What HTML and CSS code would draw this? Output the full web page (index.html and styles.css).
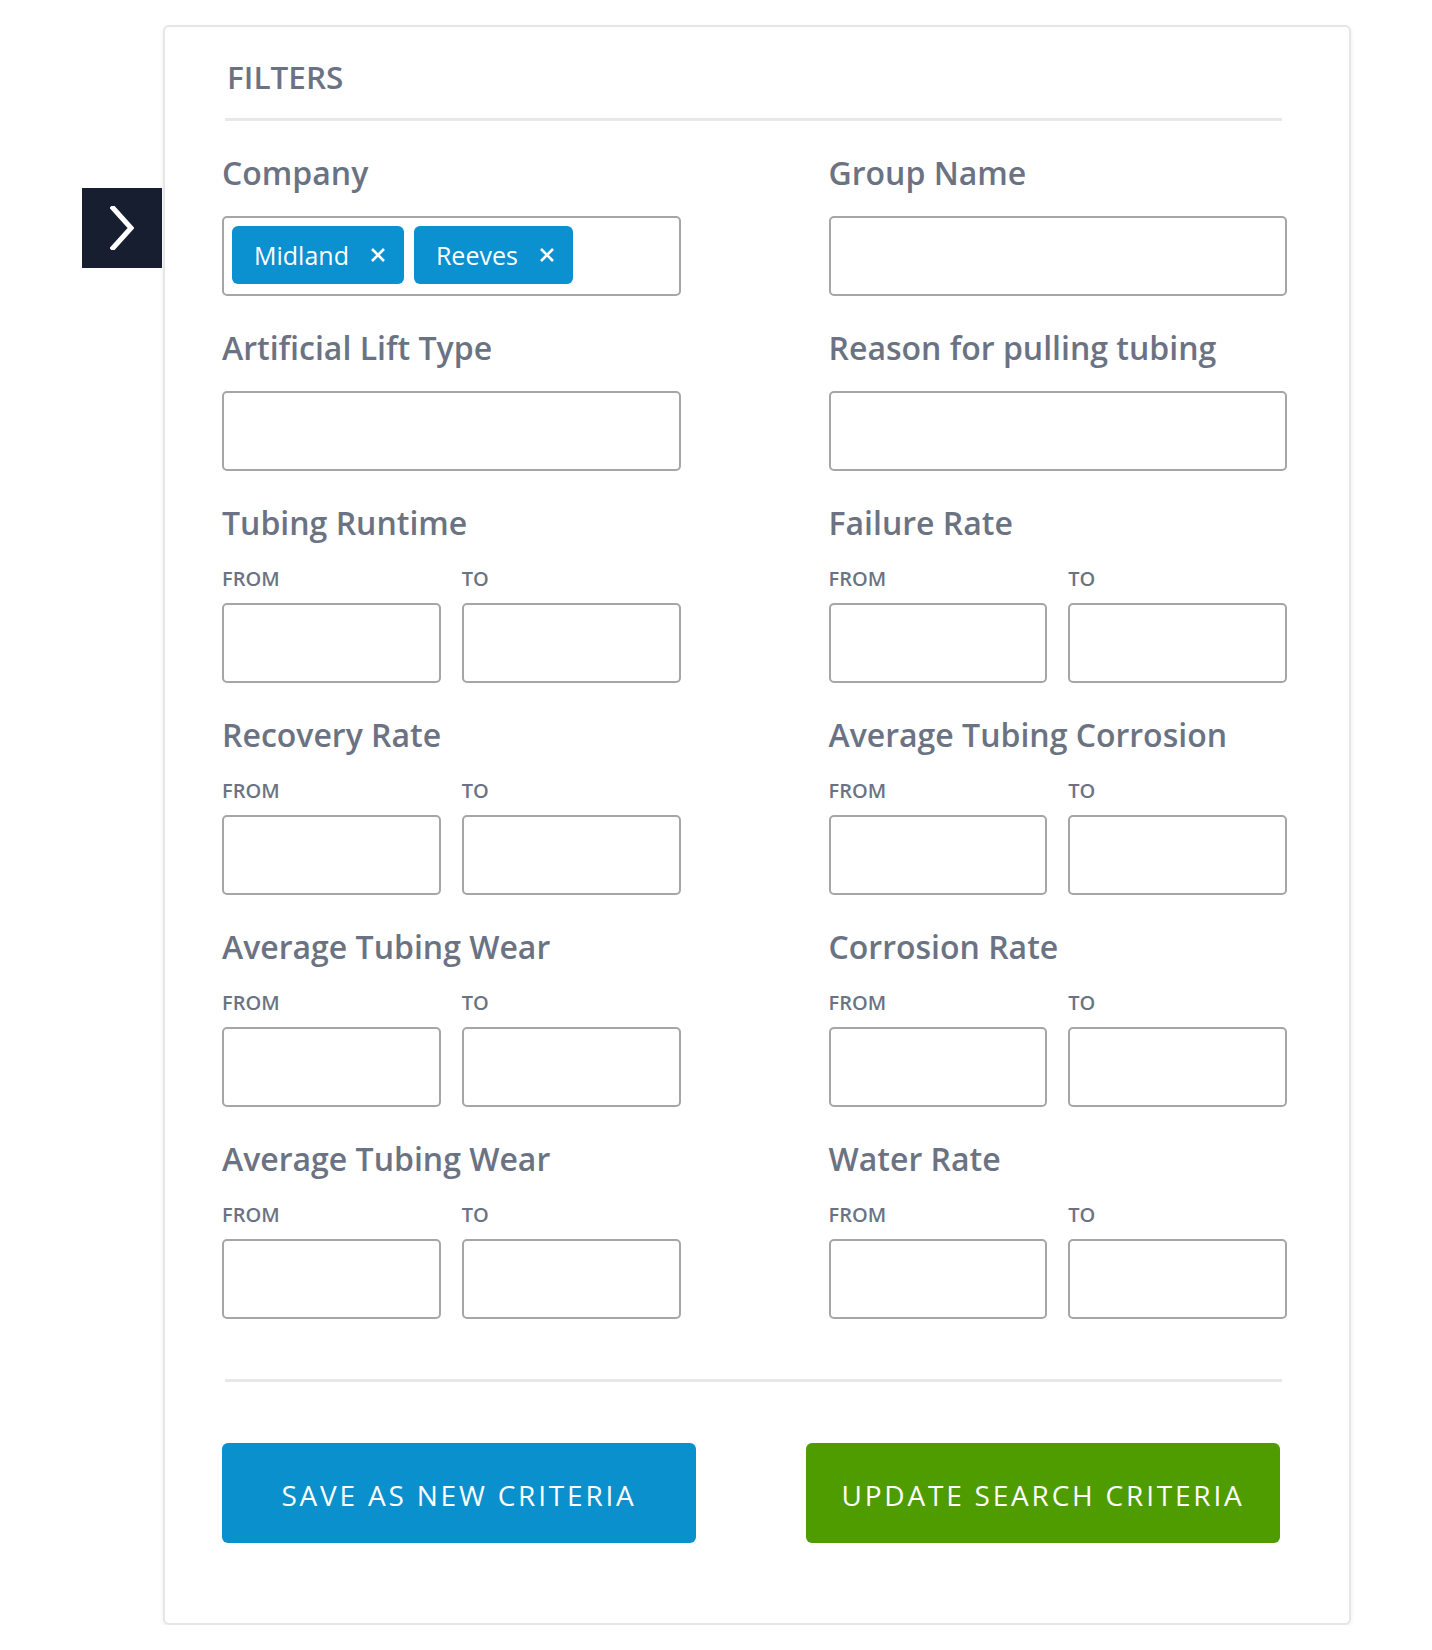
FILE: index.html
```html
<!DOCTYPE html>
<html>
<head>
<meta charset="utf-8">
<link rel="stylesheet" href="styles.css">
</head>
<body>
<div class="page">
  <button class="tab" aria-label="Expand">
    <svg width="24" height="44" viewBox="0 0 24 44"><path d="M3 2 L21 22 L3 42" fill="none" stroke="#fff" stroke-width="5" stroke-linecap="square"/></svg>
  </button>
  <div class="card">
    <div class="header"><h2 class="title">FILTERS</h2></div>
    <div class="divider"></div>
    <div class="grid">
      <div class="field">
        <div class="label">Company</div>
        <div class="input chips">
          <span class="chip">Midland<svg class="x" width="14" height="14" viewBox="0 0 14 14"><path d="M1 1 L13 13 M13 1 L1 13" stroke="#fff" stroke-width="2.6"/></svg></span>
          <span class="chip">Reeves<svg class="x" width="14" height="14" viewBox="0 0 14 14"><path d="M1 1 L13 13 M13 1 L1 13" stroke="#fff" stroke-width="2.6"/></svg></span>
        </div>
      </div>
      <div class="field">
        <div class="label">Group Name</div>
        <div class="input"></div>
      </div>
      <div class="field">
        <div class="label">Artificial Lift Type</div>
        <div class="input"></div>
      </div>
      <div class="field">
        <div class="label">Reason for pulling tubing</div>
        <div class="input"></div>
      </div>

      <div class="field">
        <div class="label">Tubing Runtime</div>
        <div class="range">
          <div class="sub"><div class="small">FROM</div><div class="input"></div></div>
          <div class="sub"><div class="small">TO</div><div class="input"></div></div>
        </div>
      </div>
      <div class="field">
        <div class="label">Failure Rate</div>
        <div class="range">
          <div class="sub"><div class="small">FROM</div><div class="input"></div></div>
          <div class="sub"><div class="small">TO</div><div class="input"></div></div>
        </div>
      </div>

      <div class="field">
        <div class="label">Recovery Rate</div>
        <div class="range">
          <div class="sub"><div class="small">FROM</div><div class="input"></div></div>
          <div class="sub"><div class="small">TO</div><div class="input"></div></div>
        </div>
      </div>
      <div class="field">
        <div class="label">Average Tubing Corrosion</div>
        <div class="range">
          <div class="sub"><div class="small">FROM</div><div class="input"></div></div>
          <div class="sub"><div class="small">TO</div><div class="input"></div></div>
        </div>
      </div>

      <div class="field">
        <div class="label">Average Tubing Wear</div>
        <div class="range">
          <div class="sub"><div class="small">FROM</div><div class="input"></div></div>
          <div class="sub"><div class="small">TO</div><div class="input"></div></div>
        </div>
      </div>
      <div class="field">
        <div class="label">Corrosion Rate</div>
        <div class="range">
          <div class="sub"><div class="small">FROM</div><div class="input"></div></div>
          <div class="sub"><div class="small">TO</div><div class="input"></div></div>
        </div>
      </div>

      <div class="field">
        <div class="label">Average Tubing Wear</div>
        <div class="range">
          <div class="sub"><div class="small">FROM</div><div class="input"></div></div>
          <div class="sub"><div class="small">TO</div><div class="input"></div></div>
        </div>
      </div>
      <div class="field">
        <div class="label">Water Rate</div>
        <div class="range">
          <div class="sub"><div class="small">FROM</div><div class="input"></div></div>
          <div class="sub"><div class="small">TO</div><div class="input"></div></div>
        </div>
      </div>
    </div>
    <div class="divider bottom"></div>
    <div class="actions">
      <button class="btn btn-blue">SAVE AS NEW CRITERIA</button>
      <button class="btn btn-green">UPDATE SEARCH CRITERIA</button>
    </div>
  </div>
</div>
</body>
</html>
```

FILE: styles.css
```css
* { box-sizing: border-box; }
html, body { margin: 0; padding: 0; background: #fff; }
body { font-family: "Open Sans", "Noto Sans", sans-serif; color: #6b7383; }

.page {
  display: flex;
  align-items: flex-start;
  padding: 25px 0 0 82px;
}

.tab {
  width: 80px;
  height: 80px;
  margin-top: 163px;
  margin-right: 1px;
  background: #161e30;
  border: 0;
  padding: 0;
  display: flex;
  align-items: center;
  justify-content: center;
  flex: none;
}

.card {
  width: 1188px;
  border: 2px solid #e6e6e6;
  border-radius: 6px;
  box-shadow: 0 2px 5px rgba(0,0,0,0.07);
  padding: 31px 62px 80px 57px;
  background: #fff;
}

.header { padding: 0 5px 0 3px; }
.title {
  margin: 0;
  font-size: 31.5px;
  line-height: 37px;
  font-weight: 600;
  color: #6b7383;
  padding-left: 2px;
}

.divider {
  height: 3px;
  background: #e8e8e8;
  margin: 23px 5px 33px 3px;
}
.divider.bottom { margin: 60px 5px 61px 3px; }

.grid {
  display: grid;
  grid-template-columns: 1fr 1fr;
  column-gap: 148px;
  row-gap: 33px;
}

.label {
  font-size: 32px;
  line-height: 38px;
  font-weight: 600;
  margin-bottom: 24px;
}

.input {
  height: 80px;
  border: 2px solid #a6a6a6;
  border-radius: 5px;
  background: #fff;
}

.chips {
  display: flex;
  gap: 10px;
  padding: 8px;
}

.chip {
  display: inline-flex;
  align-items: center;
  gap: 22px;
  height: 58px;
  padding: 0 19px 0 22px;
  background: #0b90d0;
  color: #fff;
  border-radius: 6px;
  font-size: 25px;
}

.range {
  display: grid;
  grid-template-columns: 1fr 1fr;
  column-gap: 21px;
  padding-top: 1px;
}

.small {
  font-size: 20px;
  line-height: 23px;
  font-weight: 600;
  margin-bottom: 13px;
}

.actions {
  display: flex;
  justify-content: space-between;
  padding-right: 7px;
}

.btn {
  width: 474px;
  height: 100px;
  border: 0;
  border-radius: 6px;
  color: #fff;
  font-family: "Open Sans", sans-serif;
  font-size: 28px;
  font-weight: 500;
  letter-spacing: 2.8px;
  padding: 3px 0 0 0;
}
.btn-blue { background: #0b90ce; }
.btn-green { background: #4f9c00; }
```
